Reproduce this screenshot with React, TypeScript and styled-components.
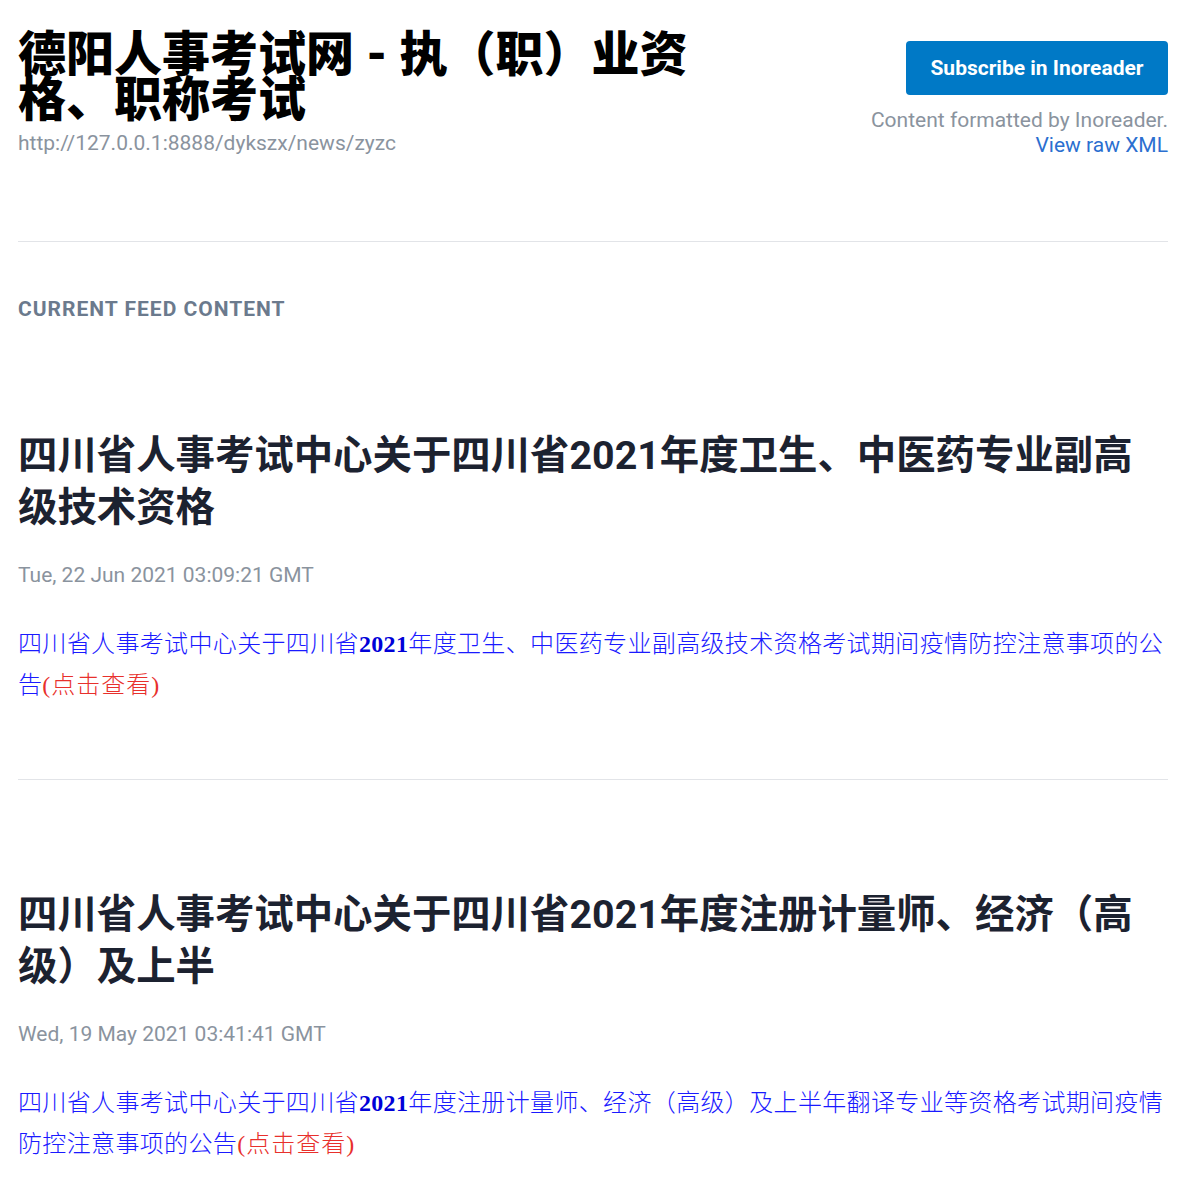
import styled, { createGlobalStyle } from 'styled-components'

const GlobalStyle = createGlobalStyle`
  html, body {
    margin: 0;
    padding: 0;
    background: #fff;
  }
  body {
    font-family: Roboto, "Noto Sans CJK SC", sans-serif;
  }
`

const articles = [
  {
    title: '四川省人事考试中心关于四川省2021年度卫生、中医药专业副高级技术资格',
    date: 'Tue, 22 Jun 2021 03:09:21 GMT',
    before: '四川省人事考试中心关于四川省',
    after: '年度卫生、中医药专业副高级技术资格考试期间疫情防控注意事项的公告',
  },
  {
    title: '四川省人事考试中心关于四川省2021年度注册计量师、经济（高级）及上半',
    date: 'Wed, 19 May 2021 03:41:41 GMT',
    before: '四川省人事考试中心关于四川省',
    after: '年度注册计量师、经济（高级）及上半年翻译专业等资格考试期间疫情防控注意事项的公告',
  },
]

const App = () => {
  return (
    <Page>
      <GlobalStyle />
      <Header>
        <HeaderLeft>
          <FeedTitle>德阳人事考试网 - 执（职）业资格、职称考试</FeedTitle>
          <FeedUrl>http://127.0.0.1:8888/dykszx/news/zyzc</FeedUrl>
        </HeaderLeft>
        <HeaderRight>
          <SubscribeButton href="#">Subscribe in Inoreader</SubscribeButton>
          <Credit>
            Content formatted by Inoreader.
            <br />
            <RawLink href="#">View raw XML</RawLink>
          </Credit>
        </HeaderRight>
      </Header>

      <Divider />

      <SectionLabel>Current Feed Content</SectionLabel>

      {articles.map((a, i) => (
        <div key={i}>
          <Article>
            <ArticleTitle>{a.title}</ArticleTitle>
            <ArticleDate>{a.date}</ArticleDate>
            <Description>
              {a.before}
              <strong>2021</strong>
              {a.after}
              <Hint>(点击查看)</Hint>
            </Description>
          </Article>
          {i < articles.length - 1 && <Divider />}
        </div>
      ))}
    </Page>
  )
}

const Page = styled.div`
  padding: 0 14px 60px 18px;
  font-family: Roboto, "Noto Sans CJK SC", sans-serif;
`

const Header = styled.header`
  display: flex;
  justify-content: space-between;
  align-items: flex-start;
  padding-top: 32px;
  margin-bottom: 83px;
`

const HeaderLeft = styled.div`
  width: 60%;
`

const FeedTitle = styled.h1`
  margin: 0;
  font-size: 48px;
  line-height: 45px;
  font-weight: 900;
  color: #000;
`

const FeedUrl = styled.div`
  margin-top: 9px;
  font-size: 21px;
  line-height: 24px;
  color: #8a939e;
`

const HeaderRight = styled.div`
  display: flex;
  flex-direction: column;
  align-items: flex-end;
  padding-top: 9px;
`

const SubscribeButton = styled.a`
  display: flex;
  align-items: center;
  justify-content: center;
  width: 262px;
  height: 54px;
  box-sizing: border-box;
  background: #0079c6;
  border-radius: 4px;
  color: #fff;
  font-size: 21px;
  font-weight: 700;
  text-decoration: none;
`

const Credit = styled.div`
  margin-top: 13px;
  text-align: right;
  font-size: 21px;
  line-height: 25px;
  color: #8a939e;
`

const RawLink = styled.a`
  color: #2b6fd0;
  text-decoration: none;
`

const Divider = styled.hr`
  margin: 0;
  border: 0;
  border-top: 1px solid #e2e4e8;
`

const SectionLabel = styled.div`
  margin-top: 55px;
  font-size: 21px;
  line-height: 24px;
  font-weight: 700;
  letter-spacing: 1px;
  text-transform: uppercase;
  color: #6b7a8d;
`

const Article = styled.article`
  padding-top: 109px;
  padding-bottom: 73px;
`

const ArticleTitle = styled.h2`
  margin: 0;
  font-size: 39.4px;
  line-height: 52px;
  font-weight: 700;
  color: #1c2230;
`

const ArticleDate = styled.div`
  margin-top: 26px;
  font-size: 21px;
  line-height: 30px;
  color: #8a939e;
`

const Description = styled.div`
  margin-top: 34px;
  font-family: "Liberation Serif", "Noto Sans CJK SC", serif;
  font-size: 24px;
  font-weight: 300;
  letter-spacing: 0.35px;
  line-height: 41px;
  color: #1a1aff;

  strong {
    font-weight: 700;
    color: #0000d8;
  }
`

const Hint = styled.span`
  color: #e8302c;
  letter-spacing: 1px;
`

export default App
